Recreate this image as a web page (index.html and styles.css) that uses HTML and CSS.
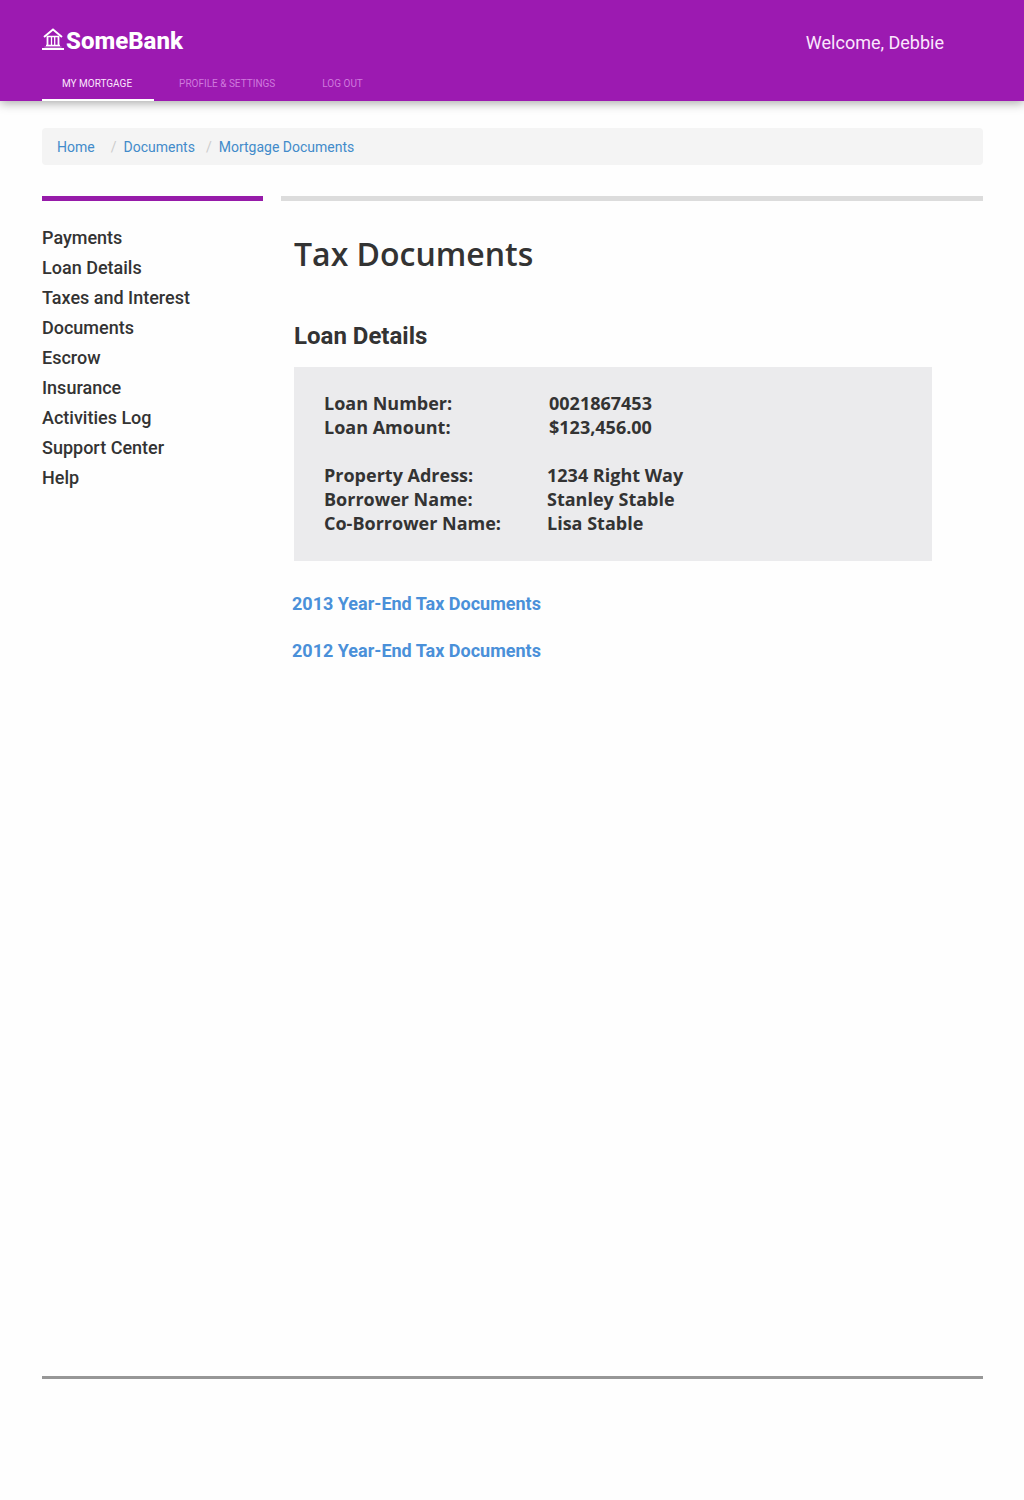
FILE: index.html
```html
<!DOCTYPE html>
<html lang="en">
<head>
<meta charset="utf-8">
<meta name="viewport" content="width=device-width, initial-scale=1">
<title>SomeBank - Tax Documents</title>
<link rel="stylesheet" href="styles.css">
</head>
<body>
<header class="header">
  <div class="header-top">
    <a class="brand" href="#">
      <svg class="brand-icon" viewBox="0 0 22 22" width="22" height="22" fill="none" stroke="currentColor" aria-hidden="true">
        <path d="M2 9 11 1.500l9 7.500" stroke-width="2"/>
        <path d="M5 8.500h12M4 17.500h14" stroke-width="1.500"/>
        <path d="M5.500 8v10M16.500 8v10" stroke-width="1.800"/>
        <path d="M9.500 9v8M12.700 9v8" stroke-width="1.300"/>
        <path d="M2.500 19h17" stroke-width="1" opacity=".5"/>
        <path d="M0 21h22" stroke-width="2"/>
      </svg>
      <span class="brand-name">SomeBank</span>
    </a>
    <p class="welcome">Welcome, Debbie</p>
  </div>
  <nav class="tabs" aria-label="Account">
    <a class="tab tab-active" href="#" aria-current="page">MY MORTGAGE</a>
    <a class="tab" href="#">PROFILE &amp; SETTINGS</a>
    <a class="tab" href="#">LOG OUT</a>
  </nav>
</header>

<div class="page">
  <nav aria-label="Breadcrumb">
    <ol class="breadcrumb">
      <li class="crumb crumb-home"><a href="#">Home</a></li>
      <li class="crumb"><a href="#">Documents</a></li>
      <li class="crumb"><a href="#">Mortgage Documents</a></li>
    </ol>
  </nav>

  <div class="columns">
    <nav class="sidebar" aria-label="Mortgage">
      <ul class="side-list">
        <li><a href="#">Payments</a></li>
        <li><a href="#">Loan Details</a></li>
        <li><a href="#">Taxes and Interest</a></li>
        <li><a href="#">Documents</a></li>
        <li><a href="#">Escrow</a></li>
        <li><a href="#">Insurance</a></li>
        <li><a href="#">Activities Log</a></li>
        <li><a href="#">Support Center</a></li>
        <li><a href="#">Help</a></li>
      </ul>
    </nav>

    <main class="main">
      <h1 class="title">Tax Documents</h1>
      <h2 class="subtitle">Loan Details</h2>
      <div class="panel">
        <table class="loan">
          <tbody class="loan-figures">
            <tr><th scope="row">Loan Number:</th><td>0021867453</td></tr>
            <tr><th scope="row">Loan Amount:</th><td>$123,456.00</td></tr>
          </tbody>
          <tbody class="loan-people">
            <tr><th scope="row">Property Adress:</th><td>1234 Right Way</td></tr>
            <tr><th scope="row">Borrower Name:</th><td>Stanley Stable</td></tr>
            <tr><th scope="row">Co-Borrower Name:</th><td>Lisa Stable</td></tr>
          </tbody>
        </table>
      </div>
      <ul class="documents">
        <li><a href="#">2013 Year-End Tax Documents</a></li>
        <li><a href="#">2012 Year-End Tax Documents</a></li>
      </ul>
    </main>
  </div>

  <footer class="footer"></footer>
</div>
</body>
</html>
```

FILE: styles.css
```css
* {
  box-sizing: border-box;
}

body {
  display: flex;
  flex-direction: column;
  min-height: 100vh;
  margin: 0;
  background: #fefefe;
  color: #333;
  font-family: Roboto, sans-serif;
}

a {
  color: inherit;
  text-decoration: none;
}

ul,
ol {
  margin: 0;
  padding: 0;
  list-style: none;
}

.header {
  padding: 26px 40px 0 42px;
  background: #9c1ab1;
  box-shadow: 0 2px 10px rgba(0, 0, 0, 0.35);
  color: #fff;
}

.header-top {
  display: flex;
  justify-content: space-between;
  height: 40px;
}

.brand {
  display: flex;
  gap: 2px;
}

.brand-icon {
  margin-top: 2px;
}

.brand-name {
  font-size: 24px;
  font-weight: 800;
  line-height: 30px;
}

.welcome {
  margin: 4px 40px 0 0;
  color: #fbe6fd;
  font-size: 18px;
  line-height: 26px;
}

.tabs {
  display: flex;
}

.tab {
  padding: 2px 22px 0 25px;
  border-bottom: 2px solid transparent;
  color: #cf79dd;
  font-size: 10px;
  line-height: 31px;
}

.tab-active {
  padding-left: 20px;
  border-bottom-color: #fff;
  color: #fbe6fd;
}

.page {
  display: flex;
  flex: 1;
  flex-direction: column;
  padding: 27px 41px 0 42px;
}

.breadcrumb {
  display: flex;
  padding: 2px 15px 0;
  border-radius: 4px;
  background: #f4f4f4;
  color: #428bca;
  font-size: 14px;
  line-height: 35px;
}

.crumb + .crumb::before {
  content: "/";
  padding: 0 7px 0 11px;
  color: #ccc;
}

.crumb-home {
  padding-right: 5px;
}

.columns {
  display: grid;
  flex: 1;
  grid-template-columns: 221px 1fr;
  gap: 18px;
  margin-top: 31px;
}

.sidebar {
  border-top: 5px solid #961ba9;
}

.side-list {
  padding-top: 22px;
  font-size: 18px;
  font-weight: 500;
  line-height: 30px;
}

.main {
  padding: 29px 51px 0 13px;
  border-top: 5px solid #dcdcdc;
}

.title {
  margin: 0;
  font-family: "Open Sans", sans-serif;
  font-size: 32px;
  font-weight: 600;
  line-height: 48px;
}

.subtitle {
  margin: 42px 0 0;
  font-size: 24px;
  font-weight: 700;
  line-height: 32px;
}

.panel {
  margin-top: 15px;
  padding: 24px 30px 26px;
  background: #ebebed;
}

.loan {
  border-collapse: collapse;
  font-family: "Open Sans", sans-serif;
  font-size: 18px;
  font-weight: 700;
  line-height: 24px;
}

.loan th,
.loan td {
  padding: 0;
  text-align: left;
}

.loan th {
  width: 223px;
}

.loan .loan-figures td {
  padding-left: 2px;
}

.loan-people::before {
  content: "";
  display: block;
  height: 24px;
}

.documents {
  display: grid;
  gap: 23px;
  margin: 31px 0 0 -2px;
  color: #4a90d9;
  font-size: 18px;
  font-weight: 700;
  line-height: 24px;
}

.footer {
  height: 124px;
  border-top: 3px solid #979797;
}
```
